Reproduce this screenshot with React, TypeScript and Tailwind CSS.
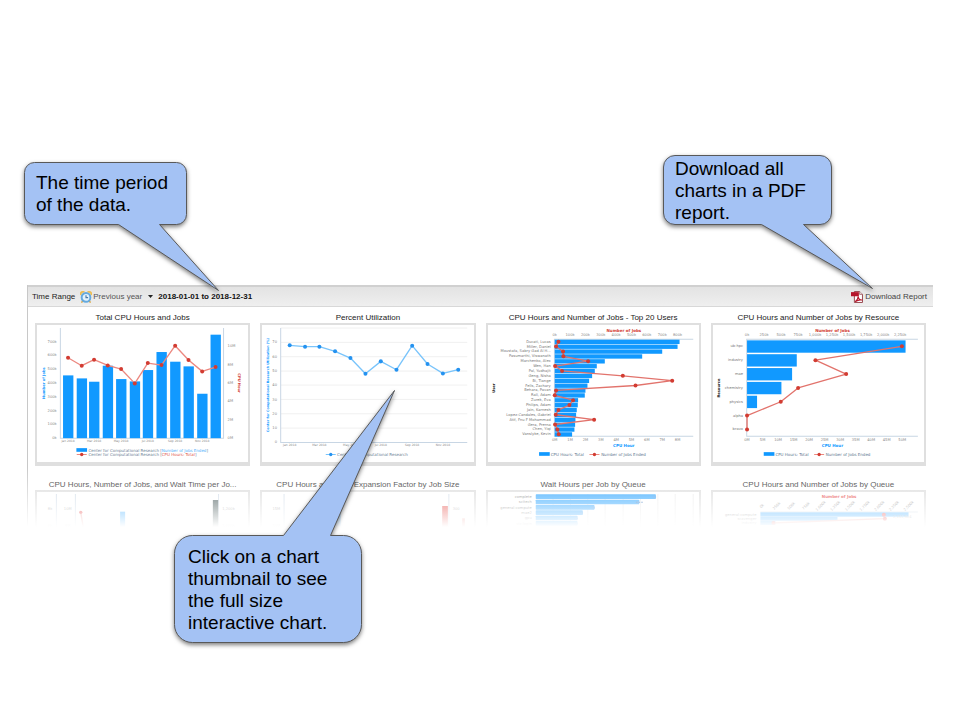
import type { ReactNode } from "react";

const BLUE = "#1199ff";
const RED = "#d23c32";
const RED_LINE = "#ec8880";
const AXIS = "#c8d6e4";
const CHART_FONT = "'DejaVu Sans', Verdana, sans-serif";

type Point = [number, number];

type LabelProps = {
  x: number;
  y: number;
  children: ReactNode;
  size?: number;
  fill?: string;
  anchor?: "start" | "middle" | "end";
  bold?: boolean;
  rotate?: number;
};

function Label({ x, y, children, size = 11, fill = "#8a8a8a", anchor = "middle", bold, rotate }: LabelProps) {
  return (
    <text
      x={x}
      y={y}
      fontSize={size}
      fill={fill}
      textAnchor={anchor}
      dominantBaseline="central"
      fontWeight={bold ? 700 : 400}
      transform={rotate ? `rotate(${rotate} ${x} ${y})` : undefined}
    >
      {children}
    </text>
  );
}

function Series({ points, line, dot }: { points: Point[]; line: string; dot: string }) {
  return (
    <g>
      <polyline points={points.map((p) => p.join(",")).join(" ")} fill="none" stroke={line} strokeWidth={4} strokeLinejoin="round" />
      {points.map(([x, y], i) => (
        <circle key={i} cx={x} cy={y} r={6} fill={dot} />
      ))}
    </g>
  );
}

function LegendMark({ x, y, line, dot }: { x: number; y: number; line: string; dot: string }) {
  return (
    <g>
      <line x1={x - 15} x2={x + 15} y1={y} y2={y} stroke={line} strokeWidth={3} />
      <circle cx={x} cy={y} r={5} fill={dot} />
    </g>
  );
}

function Canvas({ viewBox, children }: { viewBox: string; children: ReactNode }) {
  return (
    <svg viewBox={viewBox} className="block w-full" fontFamily={CHART_FONT} aria-hidden="true">
      {children}
    </svg>
  );
}

const MONTHS = ["Jan 2018", "Mar 2018", "May 2018", "Jul 2018", "Sep 2018", "Nov 2018"];

function TotalsChart() {
  const xs = [129, 170, 207, 248, 288, 329, 368, 409, 450, 490, 531, 571];
  const tops = [202, 211, 221, 173, 213, 220, 186, 132, 161, 175, 257, 80];
  const hours = [149, 173, 155, 172, 183, 226, 165, 171, 113, 156, 190, 177];
  return (
    <Canvas viewBox="36 51 633 411">
      <path d="M106 60V390H595V60" fill="none" stroke={AXIS} strokeWidth={3} />
      {xs.map((x, i) => (
        <rect key={x} x={x - 15} y={tops[i]} width={31} height={390 - tops[i]} fill={BLUE} />
      ))}
      <Series points={xs.map((x, i): Point => [x, hours[i]])} line={RED_LINE} dot={RED} />
      {[0, 1, 2, 3, 4, 5, 6, 7].map((n) => (
        <Label key={n} x={95} y={390 - n * 41.3} anchor="end">{n === 0 ? "0k" : `${n}00k`}</Label>
      ))}
      {[0, 2, 4, 6, 8, 10].map((n) => (
        <Label key={n} x={607} y={390 - n * 27.5} anchor="start">{`${n}M`}</Label>
      ))}
      {MONTHS.map((m, i) => (
        <Label key={m} x={xs[i * 2]} y={400} size={9}>{m}</Label>
      ))}
      <Label x={56} y={225} size={11} fill={BLUE} bold rotate={-90}>Number of Jobs</Label>
      <Label x={641} y={225} size={11} fill={RED} bold rotate={90}>CPU Hour</Label>
      <rect x={154} y={420} width={32} height={11} fill={BLUE} />
      <Label x={190} y={426} size={12} anchor="start" fill="#6d8195">
        Center for Computational Research [<tspan fill="#4fb0fb">Number of Jobs Ended</tspan>]
      </Label>
      <LegendMark x={170} y={439} line={RED_LINE} dot={RED} />
      <Label x={190} y={439} size={12} anchor="start" fill="#6d8195">
        Center for Computational Research [<tspan fill="#e0574e">CPU Hours: Total</tspan>]
      </Label>
    </Canvas>
  );
}

function UtilizationChart() {
  const points: Point[] = [
    [105, 112], [151, 116], [194, 116], [241, 130], [287, 150], [332, 197],
    [378, 160], [425, 185], [472, 113], [518, 168], [564, 196], [610, 185],
  ];
  return (
    <Canvas viewBox="22 51 633 411">
      {[60, 103, 146, 189, 231, 274, 317, 360].map((y) => (
        <line key={y} x1={78} x2={637} y1={y} y2={y} stroke="#e9e9e9" strokeWidth={2} />
      ))}
      <path d="M78 60V403H637" fill="none" stroke={AXIS} strokeWidth={3} />
      {[0, 10, 20, 30, 40, 50, 60, 70].map((n) => (
        <Label key={n} x={67} y={403 - n * 4.28} anchor="end">{n}</Label>
      ))}
      {MONTHS.map((m, i) => (
        <Label key={m} x={points[i * 2][0]} y={412} size={9}>{m}</Label>
      ))}
      <Label x={41} y={231} size={10} fill={BLUE} bold rotate={-90}>Center for Computational Research Utilization (%)</Label>
      <Series points={points} line="#79c4fb" dot="#2492f0" />
      <LegendMark x={228} y={439} line="#79c4fb" dot="#2492f0" />
      <Label x={247} y={438} size={12} anchor="start" fill="#6d8195">Center for Computational Research</Label>
    </Canvas>
  );
}

function RankLegend() {
  return (
    <g>
      <rect x={175} y={432} width={32} height={11} fill={BLUE} />
      <Label x={210} y={438} size={12} anchor="start" fill="#5f7890">CPU Hours: Total</Label>
      <LegendMark x={341} y={439} line={RED_LINE} dot={RED} />
      <Label x={361} y={438} size={12} anchor="start" fill="#5f7890">Number of Jobs Ended</Label>
    </g>
  );
}

const USERS: [string, number, number][] = [
  ["Ducati, Lucas", 596, 233],
  ["Miller, Daniel", 590, 226],
  ["Moustafa, Sabry Gad Al H...", 544, 247],
  ["Pasumarthi, Viswanath", 484, 248],
  ["Marchenko, Alex", 372, 322],
  ["Wen, Han", 348, 223],
  ["Pal, Yudhajit", 342, 244],
  ["Geng, Nisha", 334, 426],
  ["Bi, Tiange", 325, 574],
  ["Fells, Zachary", 320, 464],
  ["Behara, Pavan", 314, 226],
  ["Rall, Adam", 312, 222],
  ["Zurek, Eva", 292, 277],
  ["Philips, Adam", 291, 266],
  ["Jain, Karnesh", 288, 233],
  ["Lopez-Candales, Gabriel", 286, 225],
  ["Atif, Fnu F Mohammad", 284, 340],
  ["Gera, Prerna", 283, 223],
  ["Chen, Yiqi", 281, 230],
  ["Vanslyke, Kevin", 274, 234],
];

function UsersChart() {
  const rowY = (i: number) => 101 + i * 14.6;
  return (
    <Canvas viewBox="22 51 633 411">
      <path d="M637 94H221V384H637" fill="none" stroke={AXIS} strokeWidth={3} />
      {USERS.map(([name, end], i) => (
        <g key={name}>
          <rect x={222} y={rowY(i) - 6} width={end - 222} height={13} fill={BLUE} />
          <Label x={210} y={rowY(i)} size={11} anchor="end" fill="#777">{name}</Label>
        </g>
      ))}
      <Series points={USERS.map((u, i): Point => [u[2], rowY(i)])} line="#e2736c" dot={RED} />
      {[0, 1, 2, 3, 4, 5, 6, 7, 8].map((n) => (
        <g key={n}>
          <Label x={222 + n * 46} y={80}>{n === 0 ? "0k" : `${n}00k`}</Label>
          <Label x={222 + n * 46} y={396}>{`${n}M`}</Label>
        </g>
      ))}
      <Label x={429} y={68} size={12} fill={RED} bold>Number of Jobs</Label>
      <Label x={429} y={411} size={12} fill={BLUE} bold>CPU Hour</Label>
      <Label x={41} y={240} size={11} fill="#111" bold rotate={-90}>User</Label>
      <RankLegend />
    </Canvas>
  );
}

const RESOURCES: [string, number, number][] = [
  ["ub-hpc", 600, 589],
  ["industry", 274, 330],
  ["mae", 260, 422],
  ["chemistry", 228, 278],
  ["physics", 155, 226],
  ["alpha", 125, 125],
  ["bravo", 125, 125],
];
const RESOURCE_TICKS = ["0k", "250k", "500k", "750k", "1,000k", "1,250k", "1,500k", "1,750k", "2,000k", "2,250k"];

function ResourcesChart() {
  const rowY = (i: number) => 115 + i * 41.5;
  return (
    <Canvas viewBox="23 51 633 411">
      <path d="M637 94H124V384H637" fill="none" stroke={AXIS} strokeWidth={3} />
      {RESOURCES.map(([name, end], i) => (
        <g key={name}>
          <rect x={125} y={rowY(i) - 18} width={end - 125} height={37} fill={BLUE} />
          <Label x={113} y={rowY(i)} size={11} anchor="end" fill="#777">{name}</Label>
        </g>
      ))}
      <Series points={RESOURCES.map((r, i): Point => [r[2], rowY(i)])} line="#e2736c" dot={RED} />
      {RESOURCE_TICKS.map((t, i) => (
        <Label key={t} x={125 + i * 51} y={80}>{t}</Label>
      ))}
      {[0, 5, 10, 15, 20, 25, 30, 35, 40, 45, 50].map((n) => (
        <Label key={n} x={125 + n * 9.3} y={396}>{`${n}M`}</Label>
      ))}
      <Label x={381} y={68} size={12} fill={RED} bold>Number of Jobs</Label>
      <Label x={381} y={411} size={12} fill={BLUE} bold>CPU Hour</Label>
      <Label x={41} y={240} size={11} fill="#111" bold rotate={-90}>Resource</Label>
      <RankLegend />
    </Canvas>
  );
}

function WaitTimeChart() {
  return (
    <Canvas viewBox="36 81 633 105">
      <path d="M94 87V186M151 87V186M580 87V186" stroke={AXIS} strokeWidth={3} />
      <polyline points="167,142 175,190" fill="none" stroke={RED_LINE} strokeWidth={4} />
      <circle cx={167} cy={142} r={5} fill="#e01b1b" />
      <rect x={285} y={140} width={15} height={50} fill={BLUE} />
      <rect x={563} y={105} width={16} height={85} fill="#2a3f3f" />
      <Label x={75} y={133}>8k</Label>
      <Label x={128} y={133}>10M</Label>
      <Label x={610} y={133}>1,200k</Label>
      <Label x={75} y={182}>6k</Label>
      <Label x={128} y={182}>8M</Label>
      <Label x={610} y={182}>1,000k</Label>
    </Canvas>
  );
}

function ExpansionChart() {
  return (
    <Canvas viewBox="22 81 633 105">
      <path d="M88 87V186M582 87V186" stroke={AXIS} strokeWidth={3} />
      <rect x={243} y={130} width={15} height={60} fill={BLUE} />
      <rect x={562} y={123} width={17} height={70} fill="#e0302a" />
      <rect x={622} y={160} width={8} height={30} fill="#e8776f" />
      <Label x={65} y={133}>15M</Label>
      <Label x={65} y={182}>10M</Label>
      <Label x={604} y={133}>300</Label>
    </Canvas>
  );
}

const QUEUES: [string, number][] = [
  ["complete", 525],
  ["scitech", 475],
  ["general-compute", 341],
  ["mae2", 306],
  ["gpu", 290],
  ["viz-login", 290],
];

function QueueWaitChart() {
  return (
    <Canvas viewBox="22 81 633 105">
      {[217, 269, 321, 373, 427, 479, 531, 583, 637].map((x) => (
        <line key={x} x1={x} x2={x} y1={87} y2={186} stroke="#dcdcdc" strokeWidth={2} />
      ))}
      {QUEUES.map(([name, end], i) => (
        <g key={name}>
          <rect x={165} y={88 + i * 16} width={end - 165} height={14} rx={2} fill={BLUE} />
          <circle cx={end - 4} cy={96 + i * 16} r={5} fill="#2492f0" />
          <Label x={153} y={96 + i * 16} anchor="end" fill="#666">{name}</Label>
        </g>
      ))}
      <path d="M465 112H488" stroke="#2f6fb5" strokeWidth={3} strokeDasharray="5 3" />
    </Canvas>
  );
}

const QUEUE_TICKS = ["0k", "250k", "500k", "750k", "1,000k", "1,250k", "1,500k", "1,750k", "2,000k", "2,250k", "2,500k"];

function QueueJobsChart() {
  return (
    <Canvas viewBox="23 81 633 105">
      <Label x={401} y={96} size={12} fill="#e01b1b" bold>Number of Jobs</Label>
      {QUEUE_TICKS.map((t, i) => (
        <Label key={t} x={170 + i * 44} y={123} fill="#555" rotate={-45}>{t}</Label>
      ))}
      <line x1={165} x2={637} y1={141} y2={141} stroke={AXIS} strokeWidth={3} />
      <rect x={165} y={142} width={444} height={13} fill={BLUE} />
      <rect x={165} y={156} width={231} height={11} fill={BLUE} />
      <rect x={165} y={168} width={45} height={12} fill={BLUE} />
      <Series points={[[535, 149], [538, 161], [204, 174]]} line={RED_LINE} dot="#e01b1b" />
      <Label x={590} y={157}>2,151,504</Label>
      <Label x={153} y={149} anchor="end" fill="#666">general-compute</Label>
      <Label x={153} y={161} anchor="end" fill="#666">scavenger</Label>
      <Label x={153} y={174} anchor="end" fill="#666">industry</Label>
    </Canvas>
  );
}

function ChartCard({ title, clipped, children }: { title: string; clipped?: boolean; children: ReactNode }) {
  return (
    <figure className="flex min-w-0 flex-col">
      <figcaption className="truncate text-center text-[8px] leading-[10px] text-[#222]">{title}</figcaption>
      <button
        type="button"
        aria-label={title}
        className={
          clipped
            ? "block w-full border-2 border-b-0 border-[#d9d9d9] bg-white"
            : "block w-full border-2 border-b-4 border-[#dfdfdf] bg-white"
        }
      >
        {children}
      </button>
    </figure>
  );
}

function ClockIcon() {
  return (
    <svg viewBox="0 0 16 16" className="h-3 w-3 shrink-0" aria-hidden="true">
      <path d="M1 4.5A3 3 0 0 1 5 1.2M15 4.5A3 3 0 0 0 11 1.2" fill="none" stroke="#ecbd55" strokeWidth="2.4" strokeLinecap="round" />
      <path d="M3.5 13L2.5 14.8M12.5 13L13.5 14.8" stroke="#d9a748" strokeWidth="2" strokeLinecap="round" />
      <circle cx="8" cy="8.5" r="5.8" fill="#e4f2fb" stroke="#64a9de" strokeWidth="2.6" />
      <path d="M8 5.5V8.8H10.8" fill="none" stroke="#4a7ba8" strokeWidth="1.5" />
    </svg>
  );
}

function PdfIcon() {
  return (
    <svg viewBox="0 0 16 16" className="h-3 w-3 shrink-0" aria-hidden="true">
      <path d="M4.5 .7H11.5L15.3 4.5V15.3H4.5Z" fill="#fff" stroke="#8f3a42" strokeWidth="1.2" />
      <path d="M11.5 .7V4.500H15.3" fill="#eee" stroke="#8f3a42" strokeWidth=".9" />
      <rect x="0" y="1.5" width="10.500" height="5.500" fill="#b5152b" />
      <path d="M6 14C8 12 9.500 9.500 9.500 7.500C10 10.500 12 12 14.500 12C11.500 11.500 8.500 12.200 6 14Z" fill="none" stroke="#b5152b" strokeWidth="1.5" strokeLinejoin="round" />
    </svg>
  );
}

type CalloutProps = { className: string; textClass: string; viewBox: string; shapeClass: string; path: string; children: ReactNode };

/* Speech bubble: one outline holds the rounded body and its pointer. */
function Callout({ className, textClass, viewBox, shapeClass, path, children }: CalloutProps) {
  return (
    <aside className={className}>
      <svg viewBox={viewBox} className={shapeClass} aria-hidden="true">
        <path d={path} fill="#a4c2f4" stroke="#595959" strokeWidth="1" strokeLinejoin="round" />
      </svg>
      <p className={textClass}>{children}</p>
    </aside>
  );
}

export default function App() {
  return (
    <main className="relative min-h-screen bg-white px-[27px] pt-[285px] font-['Liberation_Sans',Arial,sans-serif]">
      <section className="relative border-l border-[#c8c8c8]">
        <header className="flex h-[22px] items-center justify-between border-t-2 border-b border-t-[#d0d0d0] border-b-[#d8d8d8] bg-linear-to-b from-[#e3e3e3] to-[#efefef] pr-[6px] pl-1 text-[8px] leading-[10px] text-[#222]">
          <div className="flex items-center">
            <label htmlFor="period" className="mr-[5px]">Time Range</label>
            <ClockIcon />
            <select id="period" className="ml-px w-[52px] appearance-none bg-transparent text-[#555]">
              <option>Previous year</option>
            </select>
            <svg viewBox="0 0 5 3" className="ml-[3px] h-[3px] w-[5px]" aria-hidden="true">
              <path d="M0 0H5L2.5 3Z" fill="#222" />
            </svg>
            <strong className="ml-[5px] text-[#111]">2018-01-01 to 2018-12-31</strong>
          </div>
          <button type="button" className="flex items-center gap-[2px] text-[#444]">
            <PdfIcon />
            Download Report
          </button>
        </header>

        <div className="grid grid-cols-4 gap-x-[10px] gap-y-[14px] px-[7px] pt-[6px]">
          <ChartCard title="Total CPU Hours and Jobs"><TotalsChart /></ChartCard>
          <ChartCard title="Percent Utilization"><UtilizationChart /></ChartCard>
          <ChartCard title="CPU Hours and Number of Jobs - Top 20 Users"><UsersChart /></ChartCard>
          <ChartCard title="CPU Hours and Number of Jobs by Resource"><ResourcesChart /></ChartCard>
          <ChartCard clipped title="CPU Hours, Number of Jobs, and Wait Time per Jo..."><WaitTimeChart /></ChartCard>
          <ChartCard clipped title="CPU Hours and User Expansion Factor by Job Size"><ExpansionChart /></ChartCard>
          <ChartCard clipped title="Wait Hours per Job by Queue"><QueueWaitChart /></ChartCard>
          <ChartCard clipped title="CPU Hours and Number of Jobs by Queue"><QueueJobsChart /></ChartCard>
        </div>
        <div className="pointer-events-none absolute -left-px right-0 bottom-0 h-[60px] bg-linear-to-b from-white/0 to-white" />
      </section>

      <Callout
        className="absolute top-[162px] left-[24px] h-[63px] w-[163px]"
        textClass="relative py-[10px] pl-3 text-[19px] leading-[22px] text-black"
        viewBox="0 0 200 132"
        shapeClass="absolute top-0 left-0 h-[132px] w-[200px] overflow-visible drop-shadow-[0_2px_2px_rgba(0,0,0,0.5)]"
        path="M10.5 .5H152.5A10 10 0 0 1 162.5 10.5V52.5A10 10 0 0 1 152.5 62.5H135.5L194.5 128.5L94.5 62.5H10.5A10 10 0 0 1 .5 52.5V10.5A10 10 0 0 1 10.5 .5Z"
      >
        The time period<br />of the data.
      </Callout>

      <Callout
        className="absolute top-[155px] right-[128px] h-[70px] w-[169px]"
        textClass="relative py-[3px] pl-3 text-[19px] leading-[22px] text-black"
        viewBox="0 0 215 138"
        shapeClass="absolute top-0 left-0 h-[138px] w-[215px] overflow-visible drop-shadow-[0_2px_2px_rgba(0,0,0,0.5)]"
        path="M12 .5H157A11.5 11.5 0 0 1 168.5 12V58A11.5 11.5 0 0 1 157 69.5H140.5L209.5 133.5L98.5 69.5H12A11.5 11.5 0 0 1 .5 58V12A11.5 11.5 0 0 1 12 .5Z"
      >
        Download all<br />charts in a PDF<br />report.
      </Callout>

      <Callout
        className="absolute top-[535px] left-[174px] h-[108px] w-[188px]"
        textClass="relative py-[11px] pl-[14px] text-[19px] leading-[22px] text-black"
        viewBox="0 0 225 110"
        shapeClass="absolute top-0 left-0 h-[110px] w-[225px] overflow-visible drop-shadow-[0_2px_2px_rgba(0,0,0,0.5)]"
        path="M18.5 .5H109.5L220.5 -144.5L156.5 .5H169.5A18 18 0 0 1 187.5 18.5V89.5A18 18 0 0 1 169.5 107.5H18.5A18 18 0 0 1 .5 89.5V18.5A18 18 0 0 1 18.5 .5Z"
      >
        Click on a chart<br />thumbnail to see<br />the full size<br />interactive chart.
      </Callout>
    </main>
  );
}
